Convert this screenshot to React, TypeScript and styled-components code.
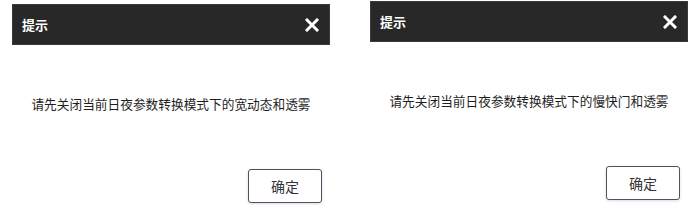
import styled, { createGlobalStyle } from 'styled-components';

const GlobalStyle = createGlobalStyle`
  body {
    margin: 0;
    background: #ffffff;
    font-family: "Noto Sans CJK SC", "Noto Sans", sans-serif;
  }
`;

interface DialogProps {
  message: string;
  top: number;
}

const CloseIcon = () => (
  <svg width="14" height="14" viewBox="0 0 14 14">
    <path
      d="M2 2 L12 12 M12 2 L2 12"
      stroke="#ffffff"
      strokeWidth="3"
      strokeLinecap="square"
    />
  </svg>
);

const Dialog = ({ message, top }: DialogProps) => {
  return (
    <StyledDialog $top={top}>
      <StyledHeader>
        <StyledTitle>提示</StyledTitle>
        <CloseIcon />
      </StyledHeader>
      <StyledMessage>{message}</StyledMessage>
      <StyledFooter>
        <StyledButton>确定</StyledButton>
      </StyledFooter>
    </StyledDialog>
  );
};

const App = () => {
  return (
    <>
      <GlobalStyle />
      <StyledPage>
        <Dialog top={4} message="请先关闭当前日夜参数转换模式下的宽动态和透雾" />
        <Dialog top={1} message="请先关闭当前日夜参数转换模式下的慢快门和透雾" />
      </StyledPage>
    </>
  );
};

export default App;

const StyledPage = styled.div`
  display: flex;
  gap: 40px;
  padding-left: 12px;
  width: 700px;
  height: 210px;
  box-sizing: border-box;
`;

const StyledDialog = styled.div<{ $top: number }>`
  display: flex;
  flex-direction: column;
  width: 318px;
  margin-top: ${props => props.$top}px;
  background: #ffffff;
`;

const StyledHeader = styled.div`
  display: flex;
  align-items: center;
  justify-content: space-between;
  height: 41px;
  padding: 0 10px 0 9px;
  background: #282828;
  border: 1px solid #3a3a3a;
  box-sizing: border-box;
`;

const StyledTitle = styled.span`
  color: #ffffff;
  font-size: 13px;
  font-weight: 700;
  letter-spacing: 0;
`;

const StyledMessage = styled.p`
  margin: 49px 0 0;
  line-height: 20px;
  font-size: 12.7px;
  color: #1e1e1e;
  text-align: center;
  white-space: nowrap;
`;

const StyledFooter = styled.div`
  display: flex;
  justify-content: flex-end;
  padding: 0 8px 0 0;
  margin-top: 55px;
`;

const StyledButton = styled.button`
  width: 74px;
  height: 34px;
  border: 1.5px solid #4d535c;
  border-radius: 3px;
  background: #ffffff;
  box-shadow: 0 1px 3px rgba(70, 80, 120, 0.2);
  font-family: "Noto Sans CJK SC", "Noto Sans", sans-serif;
  font-size: 14px;
  color: #333333;
  cursor: pointer;
`;
